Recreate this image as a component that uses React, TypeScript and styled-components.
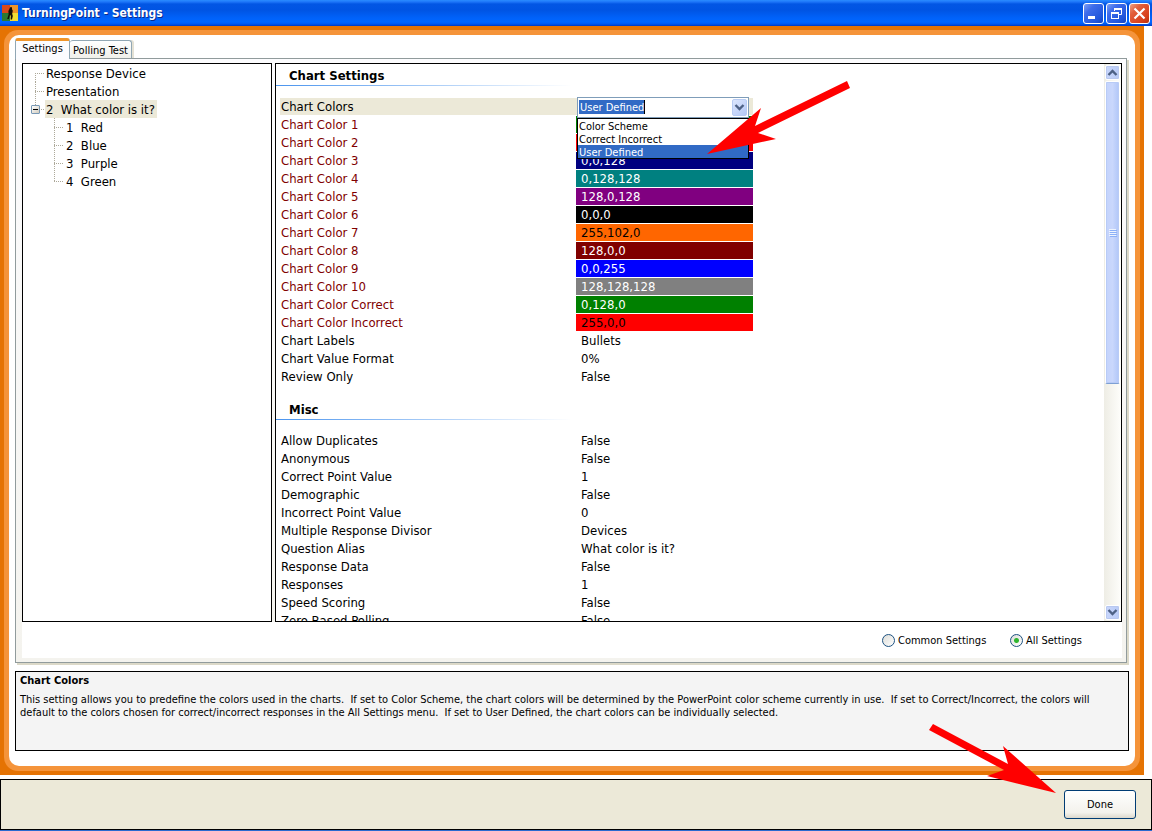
import React from "react";
import styled, { createGlobalStyle } from "styled-components";

const GlobalStyle = createGlobalStyle`
  *, *::before, *::after { box-sizing: border-box; }
  body {
    margin: 0;
    background: #fff;
    color: #000;
    font-family: "DejaVu Sans Condensed", "DejaVu Sans", Tahoma, sans-serif;
    font-size: 13px;
  }
  button, input, select { font: inherit; color: inherit; margin: 0; }
`;

const Window = styled.div`
  position: relative;
  display: flex;
  flex-direction: column;
  height: 100vh;
  overflow: hidden;
  border-bottom: 1px solid #2a6bd0;
`;

const TitleBar = styled.header`
  display: flex;
  align-items: center;
  flex: none;
  gap: 4px;
  height: 26px;
  padding: 0 2px;
  background: linear-gradient(
    180deg,
    #2a8cff 0,
    #1c74f8 2px,
    #0256e4 4px,
    #0054e3 10px,
    #0062fa 18px,
    #0066ff 22px,
    #0059f0 24px,
    #0038c0 26px
  );
`;

const Title = styled.h1`
  flex: 1;
  margin: 0;
  color: #fff;
  font-size: 12px;
  font-weight: 700;
  line-height: 20px;
  text-shadow: 1px 1px 0 #0a2a8c;
`;

const WindowButtons = styled.div`
  display: flex;
  gap: 2px;
`;

const WindowButton = styled.button<{ $danger?: boolean }>`
  width: 21px;
  height: 21px;
  padding: 0;
  border: 1px solid #fff;
  border-radius: 3px;
  background: ${(p) =>
    p.$danger
      ? "linear-gradient(135deg, #f0a084 0, #e2603c 30%, #d8401c 75%, #b8320f 100%)"
      : "linear-gradient(135deg, #7c9ff4 0, #3e6cea 30%, #2257dc 75%, #1243c0 100%)"};

  svg { display: block; }
`;

const Frame = styled.main`
  display: flex;
  flex: 1;
  min-height: 0;
  margin: 0 8px 4px 0;
  padding: 4px;
  background: #e57303;
`;

const FrameRim = styled.div`
  display: flex;
  flex: 1;
  min-width: 0;
  padding: 5px;
  border-radius: 14px;
  background: #f5943a;
`;

const Content = styled.div`
  display: flex;
  flex: 1;
  flex-direction: column;
  min-width: 0;
  padding: 3px 6px 15px;
  border-radius: 10px;
  background: #fff;
`;

const Tabs = styled.div`
  display: flex;
  flex: none;
  align-items: flex-end;
  height: 20px;
`;

const Tab = styled.button<{ $active?: boolean }>`
  position: relative;
  z-index: 1;
  height: ${(p) => (p.$active ? "21px" : "18px")};
  width: ${(p) => (p.$active ? "55px" : "62px")};
  margin-bottom: ${(p) => (p.$active ? "-1px" : "0")};
  padding: ${(p) => (p.$active ? "0 0 3px" : "2px 0 0")};
  border: 1px solid #91a7b4;
  border-top: ${(p) => (p.$active ? "3px solid #f0952a" : "1px solid #91a7b4")};
  border-left-width: ${(p) => (p.$active ? "1px" : "0")};
  border-bottom: 0;
  border-radius: 3px 3px 0 0;
  background: ${(p) => (p.$active ? "#fcfcfe" : "linear-gradient(180deg, #fff, #f0f0ea)")};
  box-shadow: ${(p) => (p.$active ? "none" : "2px 0 0 #e4e1d4")};
  font-size: 11px;
  line-height: 14px;
  white-space: nowrap;
`;

const Panel = styled.section`
  display: flex;
  flex: 1;
  flex-direction: column;
  min-height: 0;
  margin: 0 2px 1px 0;
  padding: 4px 4px 4px 6px;
  border: 1px solid #919b9c;
  background: linear-gradient(180deg, #fcfcfe, #f4f3ee);
  box-shadow: 2px 2px 0 #dcd9c8;
`;

const Panes = styled.div`
  display: flex;
  flex: 1;
  gap: 3px;
  min-height: 0;
`;

const TreePane = styled.nav`
  flex: 0 0 250px;
  border: 1px solid #000;
  background: #fff;
`;

const TreeList = styled.ul`
  margin: 0;
  padding: 0;
  list-style: none;
`;

const TreeNode = styled.li<{ $depth: number }>`
  display: flex;
  align-items: center;
  height: 18px;
  padding-left: ${(p) => (p.$depth === 0 ? "8px" : "27px")};
`;

const Branch = styled.span<{ $depth: number; $from: number; $to: number }>`
  display: flex;
  align-items: center;
  flex: none;
  width: 14px;
  height: 18px;
  margin-right: ${(p) => (p.$depth === 0 ? "0" : "1px")};
  background:
    repeating-linear-gradient(90deg, #aca899 0 1px, transparent 1px 2px) 4px 9px / 9px 1px no-repeat,
    repeating-linear-gradient(180deg, #aca899 0 1px, transparent 1px 2px) 4px ${(p) => p.$from}px / 1px
      ${(p) => p.$to - p.$from}px no-repeat;
`;

const Expander = styled.button`
  width: 9px;
  height: 9px;
  padding: 0;
  border: 1px solid #7898b5;
  border-radius: 1px;
  background: linear-gradient(#000, #000) center / 5px 1px no-repeat, linear-gradient(135deg, #fff, #d2ccbe);
`;

const NodeLabel = styled.span<{ $selected?: boolean }>`
  height: 18px;
  padding: 0 2px 0 1px;
  background: ${(p) => (p.$selected ? "#ece9d8" : "transparent")};
  line-height: 20px;
  white-space: pre;
`;

const GridPane = styled.div`
  display: flex;
  flex: 1;
  min-width: 0;
  border: 1px solid #000;
  background: #fff;
`;

const GridBody = styled.div`
  flex: 1;
  min-width: 0;
  overflow: hidden;
`;

const SectionTitle = styled.h2`
  width: 296px;
  height: 22px;
  margin: 0 0 12px;
  padding-left: 13px;
  background: linear-gradient(90deg, #4a94ee, #fff) left bottom / 100% 1px no-repeat;
  font-size: 13px;
  font-weight: 700;
  line-height: 24px;
`;

const SettingsTable = styled.table`
  width: 473px;
  margin: 0 0 12px 4px;
  border-collapse: separate;
  border-spacing: 0;
  table-layout: fixed;
`;

const NameCell = styled.th<{ $swatch?: boolean; $selected?: boolean }>`
  width: 296px;
  height: 18px;
  padding: 0 1px;
  background: ${(p) => (p.$selected ? "#ece9d8" : "transparent")};
  border-bottom: 1px solid #fff;
  color: ${(p) => (p.$swatch ? "#800000" : "#000")};
  font-weight: 400;
  line-height: 17px;
  text-align: left;
`;

const ValueCell = styled.td<{ $fill?: string; $ink?: string }>`
  position: relative;
  height: 18px;
  padding: 0 5px;
  background: ${(p) => p.$fill ?? "transparent"};
  border-bottom: 1px solid #fff;
  color: ${(p) => p.$ink ?? "#000"};
  line-height: 17px;
`;

const Combo = styled.div`
  position: absolute;
  z-index: 2;
  top: -1px;
  left: 1px;
  width: 172px;
  color: #000;
  font-size: 11px;
`;

const ComboBox = styled.div`
  display: flex;
  align-items: center;
  height: 21px;
  padding: 1px;
  border: 1px solid #7f9db9;
  background: #fff;
`;

const ComboSelect = styled.select`
  flex: 1;
  min-width: 0;
  height: 15px;
  padding: 0 1px;
  border: 0;
  border-radius: 0;
  appearance: none;
  outline: 0;
  background: linear-gradient(90deg, #316ac5 65px, #000 65px) 0 0 / 66px 14px no-repeat;
  color: #fff;
  line-height: 13px;
`;

const ComboArrow = styled.button`
  width: 15px;
  height: 17px;
  padding: 0;
  border: 1px solid #b8ccf4;
  border-radius: 2px;
  background: linear-gradient(135deg, #dce6fd, #b4c8f6);

  svg { display: block; }
`;

const OptionList = styled.ul`
  margin: 0;
  padding: 0;
  border: 1px solid #000;
  background: #fff;
  list-style: none;
`;

const Option = styled.li<{ $active?: boolean }>`
  height: 13px;
  padding-left: 1px;
  background: ${(p) => (p.$active ? "#316ac5" : "#fff")};
  color: ${(p) => (p.$active ? "#fff" : "#000")};
  line-height: 15px;
`;

const ScrollBar = styled.div`
  display: flex;
  flex: 0 0 17px;
  flex-direction: column;
  padding: 1px;
  background: linear-gradient(90deg, #eeede5, #fefefb);
`;

const ScrollButton = styled.button`
  flex: none;
  height: 15px;
  padding: 0;
  border: 1px solid #fff;
  border-radius: 2px;
  background: linear-gradient(90deg, #c8d6fb, #b9cbf7);
  box-shadow: inset 0 0 0 1px #b8c8f0;

  svg { display: block; }
`;

const Track = styled.div`
  flex: 1;
  min-height: 0;
  padding: 1px 0;
`;

const Thumb = styled.div`
  display: flex;
  align-items: center;
  justify-content: center;
  height: 58%;
  border: 1px solid #fff;
  border-bottom-color: #7ea0d4;
  border-radius: 2px;
  background: linear-gradient(90deg, #c3d3fc, #c9d7fc 50%, #b0c6f8);
  box-shadow: inset 0 0 0 1px #b8cbf6;
`;

const Scope = styled.fieldset`
  display: grid;
  flex: none;
  grid-template-columns: 128px 112px;
  grid-template-rows: 36px;
  align-items: center;
  justify-content: end;
  min-width: 0;
  margin: 0;
  padding: 0;
  border: 0;
  background: #fff;
  font-size: 11px;
`;

const ScopeOption = styled.label`
  display: flex;
  align-items: center;
  gap: 3px;
  white-space: nowrap;
`;

const Radio = styled.input`
  width: 13px;
  height: 13px;
  border: 1px solid #1d5281;
  border-radius: 50%;
  appearance: none;
  background: linear-gradient(135deg, #dcdcd7, #fff);

  &:checked {
    background: radial-gradient(circle, #2fb52f 0 2px, transparent 3px), linear-gradient(135deg, #dcdcd7, #fff);
  }
`;

const Help = styled.section`
  flex: none;
  height: 80px;
  margin-top: 7px;
  padding: 1px 4px;
  border: 1px solid #000;
  background: #f4f4f4;
  font-size: 11px;
`;

const HelpTitle = styled.h2`
  margin: 0 0 5px;
  font-size: 11px;
  font-weight: 700;
  line-height: 15px;
`;

const HelpText = styled.p`
  margin: 0;
  line-height: 13px;
  white-space: pre-wrap;
`;

const Footer = styled.footer`
  display: flex;
  flex: none;
  align-items: center;
  justify-content: flex-end;
  height: 51px;
  padding: 0 15px;
  border: 1px solid #000;
  background: #ece9d8;
`;

const DoneButton = styled.button`
  width: 72px;
  height: 29px;
  padding: 0;
  border: 1px solid #003c74;
  border-radius: 3px;
  background: linear-gradient(180deg, #fff, #f3f2ec 80%, #dcd8cc);
  font-size: 11px;
`;

const ComboPointer = styled.svg`
  position: absolute;
  z-index: 3;
  top: 76px;
  left: 700px;
`;

const DonePointer = styled.svg`
  position: absolute;
  z-index: 3;
  right: 92px;
  bottom: 32px;
`;

const AppIcon = () => (
  <svg width="16" height="16" viewBox="0 0 16 16" aria-hidden="true">
    <rect width="8" height="8" fill="#d8481c" />
    <rect x="8" width="8" height="8" fill="#ee9428" />
    <rect y="8" width="8" height="8" fill="#2c7a34" />
    <rect x="8" y="8" width="8" height="8" fill="#f4dc34" />
    <path
      d="M8 2.2h2v2l.8 1.6-.6 3 .6 2.200-.8 3.500H8.600l.2-3.500-.8-1.300-1.200 4.300H5.200L6.600 9.500 6.400 6 7.400 4z"
      fill="#160e08"
    />
  </svg>
);

const Chevron = ({ up, width, height }: { up?: boolean; width: number; height: number }) => (
  <svg width={width} height={height} viewBox="-6.500 -6.500 13 13" aria-hidden="true">
    <path
      d={up ? "M-4 2.500 L0 -1.500 L4 2.500" : "M-4 -2.500 L0 1.500 L4 -2.500"}
      fill="none"
      stroke="#4d6185"
      strokeWidth="2.400"
    />
  </svg>
);

const SWATCH_INK = "#fff";

type Setting = { name: string; value?: string; fill?: string; ink?: string; swatch?: boolean };

const chartSettings: Setting[] = [
  { name: "Chart Color 1", fill: "#008000", swatch: true },
  { name: "Chart Color 2", fill: "#ff0000", swatch: true },
  { name: "Chart Color 3", value: "0,0,128", fill: "#000080", ink: SWATCH_INK, swatch: true },
  { name: "Chart Color 4", value: "0,128,128", fill: "#008080", ink: SWATCH_INK, swatch: true },
  { name: "Chart Color 5", value: "128,0,128", fill: "#800080", ink: SWATCH_INK, swatch: true },
  { name: "Chart Color 6", value: "0,0,0", fill: "#000000", ink: SWATCH_INK, swatch: true },
  { name: "Chart Color 7", value: "255,102,0", fill: "#ff6600", swatch: true },
  { name: "Chart Color 8", value: "128,0,0", fill: "#800000", ink: SWATCH_INK, swatch: true },
  { name: "Chart Color 9", value: "0,0,255", fill: "#0000ff", ink: SWATCH_INK, swatch: true },
  { name: "Chart Color 10", value: "128,128,128", fill: "#808080", ink: SWATCH_INK, swatch: true },
  { name: "Chart Color Correct", value: "0,128,0", fill: "#008000", ink: SWATCH_INK, swatch: true },
  { name: "Chart Color Incorrect", value: "255,0,0", fill: "#ff0000", swatch: true },
  { name: "Chart Labels", value: "Bullets" },
  { name: "Chart Value Format", value: "0%" },
  { name: "Review Only", value: "False" },
];

const miscSettings: Setting[] = [
  { name: "Allow Duplicates", value: "False" },
  { name: "Anonymous", value: "False" },
  { name: "Correct Point Value", value: "1" },
  { name: "Demographic", value: "False" },
  { name: "Incorrect Point Value", value: "0" },
  { name: "Multiple Response Divisor", value: "Devices" },
  { name: "Question Alias", value: "What color is it?" },
  { name: "Response Data", value: "False" },
  { name: "Responses", value: "1" },
  { name: "Speed Scoring", value: "False" },
  { name: "Zero Based Polling", value: "False" },
];

const colorModes = ["Color Scheme", "Correct Incorrect", "User Defined"];

const tree = [
  { label: "Response Device", depth: 0, from: 9, to: 18 },
  { label: "Presentation", depth: 0, from: 0, to: 18 },
  { label: "2  What color is it?", depth: 0, from: 0, to: 9, open: true, selected: true },
  { label: "1  Red", depth: 1, from: 0, to: 18 },
  { label: "2  Blue", depth: 1, from: 0, to: 18 },
  { label: "3  Purple", depth: 1, from: 0, to: 18 },
  { label: "4  Green", depth: 1, from: 0, to: 10 },
];

const SettingRow = ({ name, value, fill, ink, swatch }: Setting) => (
  <tr>
    <NameCell scope="row" $swatch={swatch}>{name}</NameCell>
    <ValueCell $fill={fill} $ink={ink}>{value}</ValueCell>
  </tr>
);

export default function App() {
  const [mode, setMode] = React.useState("User Defined");
  const [scope, setScope] = React.useState("all");

  return (
    <Window>
      <GlobalStyle />
      <TitleBar>
        <AppIcon />
        <Title>TurningPoint - Settings</Title>
        <WindowButtons>
          <WindowButton aria-label="Minimize">
            <svg width="19" height="19"><rect x="4" y="12" width="7" height="3" fill="#fff" /></svg>
          </WindowButton>
          <WindowButton aria-label="Restore">
            <svg width="19" height="19" fill="none" stroke="#fff">
              <path d="M7.500 7V4.500H14.500V10.500H12" />
              <path d="M7 5H15" strokeWidth="2" />
              <rect x="4.500" y="8.500" width="7" height="6" />
              <path d="M4 9H12" strokeWidth="2" />
            </svg>
          </WindowButton>
          <WindowButton aria-label="Close" $danger>
            <svg width="19" height="19"><path d="M4.500 4.500L14.500 14.500M14.500 4.500L4.500 14.500" stroke="#fff" strokeWidth="2.200" /></svg>
          </WindowButton>
        </WindowButtons>
      </TitleBar>

      <Frame>
        <FrameRim>
          <Content>
            <Tabs role="tablist">
              <Tab role="tab" aria-selected="true" $active>Settings</Tab>
              <Tab role="tab" aria-selected="false">Polling Test</Tab>
            </Tabs>
            <Panel>
              <Panes>
                <TreePane>
                  <TreeList>
                    {tree.map((node) => (
                      <TreeNode key={node.label} $depth={node.depth}>
                        <Branch $depth={node.depth} $from={node.from} $to={node.to}>
                          {node.open && <Expander aria-label="Collapse" />}
                        </Branch>
                        <NodeLabel $selected={node.selected}>{node.label}</NodeLabel>
                      </TreeNode>
                    ))}
                  </TreeList>
                </TreePane>
                <GridPane>
                  <GridBody>
                    <SectionTitle>Chart Settings</SectionTitle>
                    <SettingsTable>
                      <tbody>
                        <tr>
                          <NameCell scope="row" $selected>
                            <label htmlFor="chart-colors">Chart Colors</label>
                          </NameCell>
                          <ValueCell $fill="#ece9d8">
                            <Combo>
                              <ComboBox>
                                <ComboSelect id="chart-colors" value={mode} onChange={(e) => setMode(e.target.value)}>
                                  {colorModes.map((m) => <option key={m}>{m}</option>)}
                                </ComboSelect>
                                <ComboArrow aria-label="Open list"><Chevron width={13} height={15} /></ComboArrow>
                              </ComboBox>
                              <OptionList role="listbox" aria-label="Chart Colors">
                                {colorModes.map((m) => (
                                  <Option
                                    key={m}
                                    role="option"
                                    aria-selected={m === mode}
                                    $active={m === mode}
                                    onClick={() => setMode(m)}
                                  >
                                    {m}
                                  </Option>
                                ))}
                              </OptionList>
                            </Combo>
                          </ValueCell>
                        </tr>
                        {chartSettings.map((s) => <SettingRow key={s.name} {...s} />)}
                      </tbody>
                    </SettingsTable>
                    <SectionTitle>Misc</SectionTitle>
                    <SettingsTable>
                      <tbody>{miscSettings.map((s) => <SettingRow key={s.name} {...s} />)}</tbody>
                    </SettingsTable>
                  </GridBody>
                  <ScrollBar>
                    <ScrollButton aria-label="Scroll up"><Chevron up width={13} height={13} /></ScrollButton>
                    <Track>
                      <Thumb>
                        <svg width="8" height="8" aria-hidden="true">
                          <path d="M0 .5H7M0 2.500H7M0 4.500H7M0 6.500H7" stroke="#eef4fe" />
                          <path d="M1 1.500H8M1 3.500H8M1 5.500H8M1 7.500H8" stroke="#8cb0f8" />
                        </svg>
                      </Thumb>
                    </Track>
                    <ScrollButton aria-label="Scroll down"><Chevron width={13} height={13} /></ScrollButton>
                  </ScrollBar>
                </GridPane>
              </Panes>
              <Scope aria-label="Settings shown">
                <ScopeOption>
                  <Radio type="radio" name="scope" checked={scope === "common"} onChange={() => setScope("common")} />
                  Common Settings
                </ScopeOption>
                <ScopeOption>
                  <Radio type="radio" name="scope" checked={scope === "all"} onChange={() => setScope("all")} />
                  All Settings
                </ScopeOption>
              </Scope>
            </Panel>
            <Help>
              <HelpTitle>Chart Colors</HelpTitle>
              <HelpText>
                {"This setting allows you to predefine the colors used in the charts.  If set to Color Scheme, the chart colors will be determined by the PowerPoint color scheme currently in use.  If set to Correct/Incorrect, the colors will default to the colors chosen for correct/incorrect responses in the All Settings menu.  If set to User Defined, the chart colors can be individually selected."}
              </HelpText>
            </Help>
          </Content>
        </FrameRim>
      </Frame>

      <Footer>
        <DoneButton>Done</DoneButton>
      </Footer>

      <ComboPointer width="152" height="84" fill="#f00" aria-hidden="true">
        <path d="M147 5L150 12L58 57L76 63L7 78L61 32L55 50Z" />
      </ComboPointer>
      <DonePointer width="132" height="74" fill="#f00" aria-hidden="true">
        <path d="M5 0L1 6L76 46L59 52L128 69L75 22L80 40Z" />
      </DonePointer>
    </Window>
  );
}
